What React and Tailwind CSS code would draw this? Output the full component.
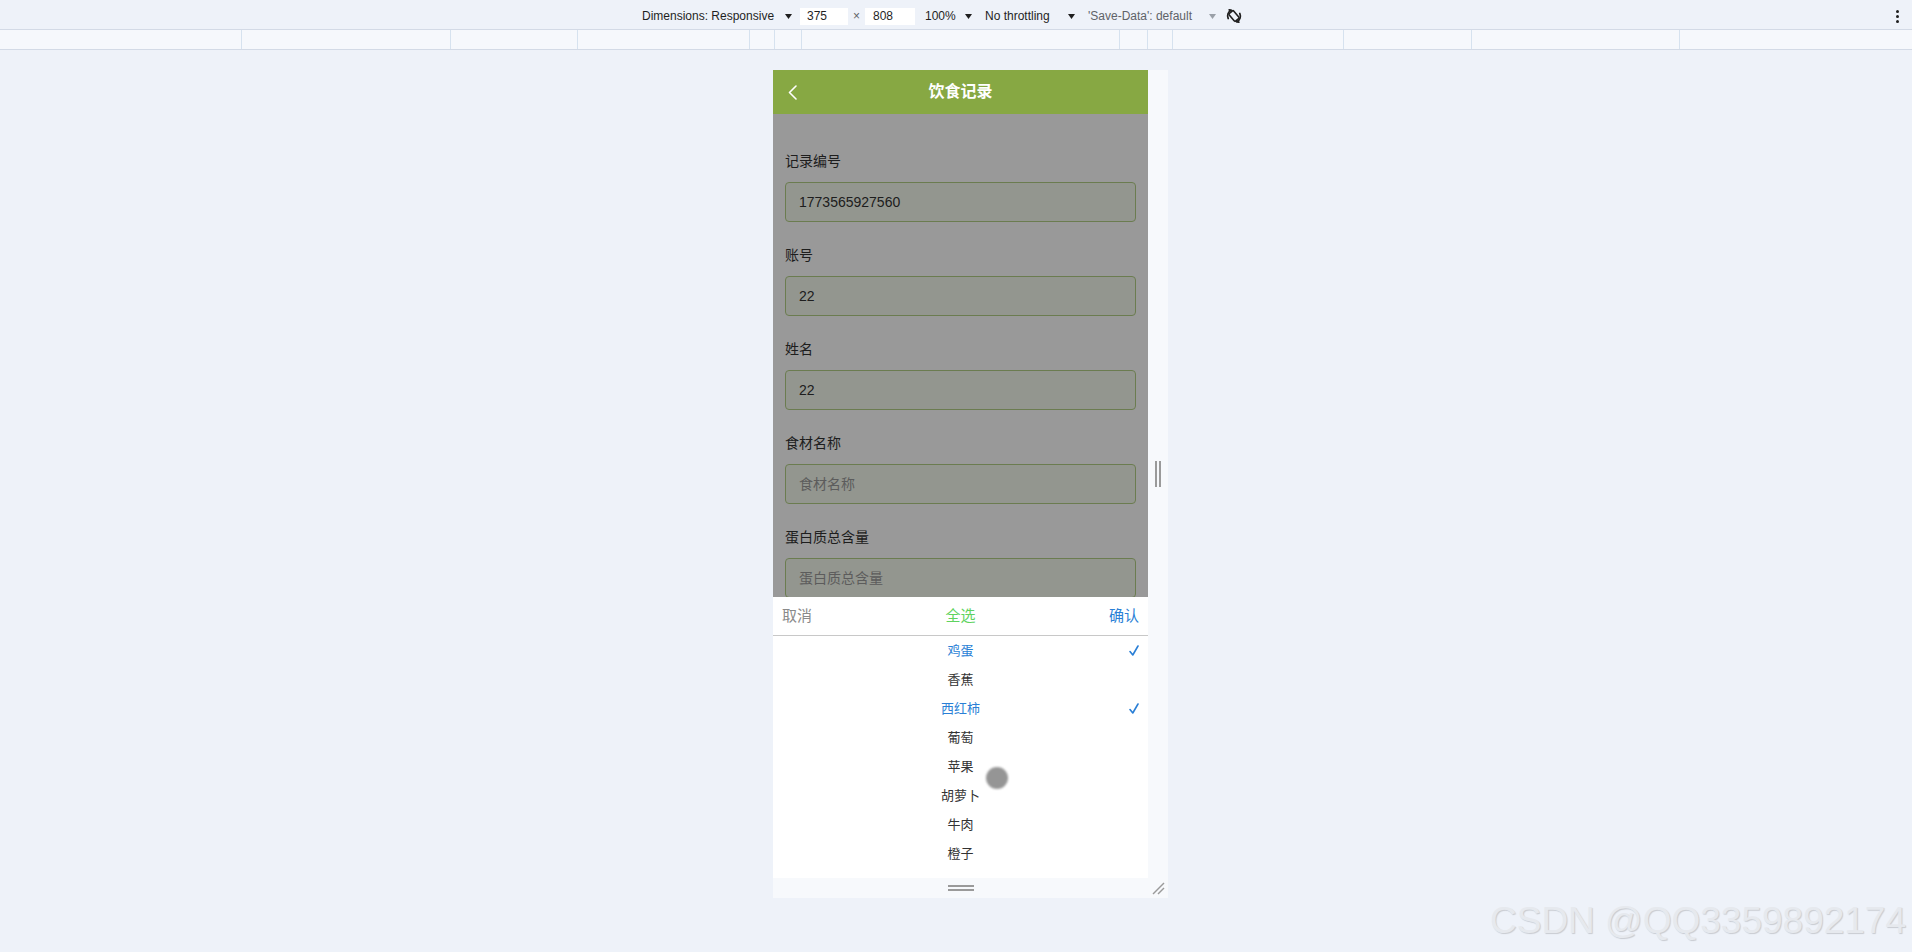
import React from 'react'

const font = { fontFamily: '"Liberation Sans", "Noto Sans CJK SC", sans-serif' }

const rulerWidths = [241, 209, 127, 172, 25, 27, 318, 28, 25, 171, 128, 208]

const fields = [
  { label: '记录编号', value: '1773565927560' },
  { label: '账号', value: '22' },
  { label: '姓名', value: '22' },
  { label: '食材名称', placeholder: '食材名称' },
  { label: '蛋白质总含量', placeholder: '蛋白质总含量' },
  { label: '脂肪总含量', placeholder: '脂肪总含量' },
  { label: '碳水总含量', placeholder: '碳水总含量' },
]

const foods = [
  { name: '鸡蛋', checked: true },
  { name: '香蕉' },
  { name: '西红柿', checked: true },
  { name: '葡萄' },
  { name: '苹果' },
  { name: '胡萝卜' },
  { name: '牛肉' },
  { name: '橙子' },
]

function Caret({ gray }) {
  return (
    <svg width="7" height="5" viewBox="0 0 7 5">
      <path d="M0 0 L7 0 L3.5 5 Z" fill={gray ? '#9aa0a8' : '#1f1f1f'} />
    </svg>
  )
}

function RotateIcon() {
  return (
    <svg width="18" height="18" viewBox="0 0 18 18" fill="none" stroke="#1f1f1f" strokeWidth="1.8" strokeLinecap="round">
      <g transform="rotate(-40 9 9)">
        <rect x="6" y="4" width="6" height="10" rx="1.2" strokeWidth="1.6" />
      </g>
      <path d="M3.2 11.5 A6.5 6.5 0 0 1 6 3.3" />
      <path d="M14.8 6.5 A6.5 6.5 0 0 1 12 14.7" />
      <path d="M6 3.3 L4.2 2.8" />
      <path d="M12 14.7 L13.8 15.2" />
    </svg>
  )
}

function Toolbar() {
  return (
    <div className="h-[30px] pt-[3px] bg-[#eef2f9] border-b border-[#d3dae6] flex items-center text-[12px] text-[#1f1f1f]">
      <div className="flex items-center pl-[642px]">
        <span className="w-[143px] whitespace-nowrap">Dimensions: Responsive</span>
        <span className="w-[15px] flex items-center"><Caret /></span>
        <span className="w-[48px] h-[17px] bg-white pl-[7px] leading-[17px]">375</span>
        <span className="w-[17px] text-center text-[#5f6368]">×</span>
        <span className="w-[50px] h-[17px] bg-white pl-[8px] leading-[17px]">808</span>
        <span className="w-[10px]" />
        <span className="w-[40px]">100%</span>
        <span className="w-[20px] flex items-center"><Caret /></span>
        <span className="w-[83px] whitespace-nowrap">No throttling</span>
        <span className="w-[20px] flex items-center"><Caret /></span>
        <span className="w-[121px] whitespace-nowrap text-[#5f6368]">'Save-Data': default</span>
        <span className="w-[16px] flex items-center"><Caret gray /></span>
        <span className="w-[18px] flex items-center"><RotateIcon /></span>
      </div>
      <div className="ml-auto mr-[13px] flex flex-col gap-[2px]">
        <span className="w-[3px] h-[3px] rounded-full bg-[#1f1f1f]" />
        <span className="w-[3px] h-[3px] rounded-full bg-[#1f1f1f]" />
        <span className="w-[3px] h-[3px] rounded-full bg-[#1f1f1f]" />
      </div>
    </div>
  )
}

function Ruler() {
  return (
    <div className="h-[20px] bg-[#f6f8fc] border-b border-[#d3dae6] flex">
      {rulerWidths.map((w, i) => (
        <div
          key={i}
          className={i === 0 ? 'h-full shrink-0' : 'h-full shrink-0 border-l border-[#d6e2ef]'}
          style={{ width: w }}
        />
      ))}
      <div className="h-full flex-1 border-l border-[#d6e2ef]" />
    </div>
  )
}

function Phone() {
  return (
    <div className="relative w-[375px] h-[808px] bg-white overflow-hidden">
      {/* header */}
      <div className="h-[44px] bg-[#87a843] flex items-center relative">
        <svg className="ml-[14px]" width="11" height="15" viewBox="0 0 11 15" fill="none" stroke="#fff" strokeWidth="1.6" strokeLinecap="round" strokeLinejoin="round">
          <path d="M9 1 L2.5 7.5 L9 14" />
        </svg>
        <div className="absolute inset-0 flex items-center justify-center text-white text-[16px] font-bold">饮食记录</div>
      </div>

      {/* form */}
      <div className="relative h-[764px] overflow-hidden">
        <div className="px-3 pt-[37px] flex flex-col gap-[23px]">
          {fields.map((f) => (
            <div key={f.label}>
              <div className="h-5 leading-5 text-[14px] text-[#333]">{f.label}</div>
              <div className="mt-[11px] h-10 rounded-[4px] border border-[#b3cf86] bg-[#f6fbef] flex items-center pl-[13px] text-[14px]">
                {f.value ? (
                  <span className="text-[#333]">{f.value}</span>
                ) : (
                  <span className="text-[#9a9a9a]">{f.placeholder}</span>
                )}
              </div>
            </div>
          ))}
        </div>
        <div className="absolute inset-0 bg-black/40" />
      </div>

      {/* picker sheet */}
      <div className="absolute left-0 right-0 bottom-0 h-[281px] bg-white">
        <div className="h-[39px] border-b border-[#c8c8c8] flex items-center justify-between pl-[9px] pr-[9px] text-[15px]">
          <span className="text-[#8a8a8a]">取消</span>
          <span className="text-[#5fd35f]">全选</span>
          <span className="text-[#2a7fd6]">确认</span>
        </div>
        <div className="pb-[10px]">
          {foods.map((f) => (
            <div key={f.name} className="relative h-[29px] flex items-center justify-center text-[13px]">
              <span className={f.checked ? 'text-[#2a7fd6]' : 'text-[#333]'}>{f.name}</span>
              {f.checked && (
                <svg className="absolute right-[9px]" width="10" height="11" viewBox="0 0 10 11" fill="none" stroke="#2a7fd6" strokeWidth="1.6" strokeLinecap="round" strokeLinejoin="round">
                  <path d="M1 6.5 L3.8 10 L9 1" />
                </svg>
              )}
            </div>
          ))}
        </div>
      </div>

      {/* touch cursor */}
      <div className="absolute left-[213px] top-[697px] w-[22px] h-[22px] rounded-full bg-[#8a8a8a] opacity-90 blur-[1px]" />
    </div>
  )
}

export default function App() {
  return (
    <div className="relative w-[1912px] h-[952px] bg-[#eef2f9] overflow-hidden" style={font}>
      <Toolbar />
      <Ruler />
      <div className="pl-[773px] pt-[20px]">
        <div className="flex">
          <Phone />
          <div className="w-[20px] h-[808px] bg-[#f7f9fc] flex items-center justify-center gap-[2px]">
            <span className="w-[2px] h-[26px] bg-[#9a9a9a]" />
            <span className="w-[2px] h-[26px] bg-[#9a9a9a]" />
          </div>
        </div>
        <div className="flex">
          <div className="w-[375px] h-[20px] bg-[#f7f9fc] flex flex-col items-center justify-center gap-[2px]">
            <span className="w-[26px] h-[2px] bg-[#9a9a9a]" />
            <span className="w-[26px] h-[2px] bg-[#9a9a9a]" />
          </div>
          <div className="w-[20px] h-[20px] bg-[#f7f9fc] flex items-center justify-center">
            <svg width="14" height="14" viewBox="0 0 14 14" stroke="#9a9a9a" strokeWidth="1.4">
              <path d="M2 13 L13 2" />
              <path d="M7 13 L13 7" />
            </svg>
          </div>
        </div>
      </div>

      {/* watermark */}
      <div className="absolute left-[1490px] top-[902px] text-[37px] leading-none text-[#e6e9ee] whitespace-nowrap [text-shadow:1px_1px_1px_rgba(0,0,0,0.16)]">
        CSDN @QQ3359892174
      </div>
    </div>
  )
}
